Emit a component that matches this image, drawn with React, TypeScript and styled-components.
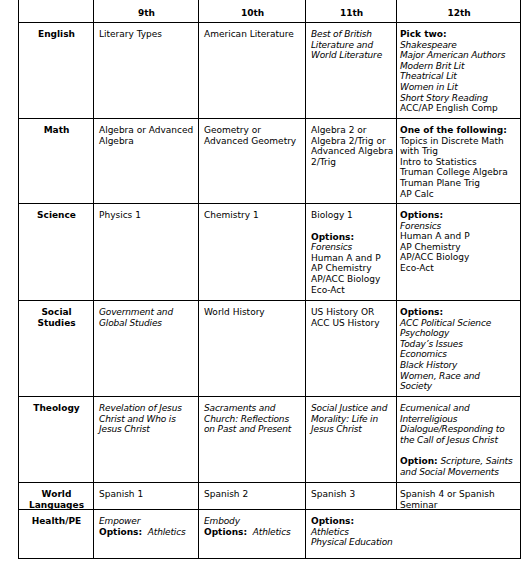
import React from 'react';
import styled, { createGlobalStyle } from 'styled-components';

const GlobalStyle = createGlobalStyle`
    html, body {
        margin: 0;
        padding: 0;
        background: #ffffff;
    }
    body {
        font-family: 'DejaVu Sans', Verdana, sans-serif;
        font-size: 9px;
        line-height: 10.6px;
        color: #000000;
    }
`;

const Page = styled.div`
    padding-left: 18px;
    margin-top: -1px;
`;

const Grid = styled.div`
    display: grid;
    width: max-content;
    grid-template-columns: 75px 105px 107px 91px 124px;
    grid-template-rows: 23px 96px 85px 97px 96px 86px 27px 49px;
    border-left: 1px solid #000;
    border-top: 1px solid #000;
`;

const Cell = styled.div<{ $center?: boolean; $span?: number; $top?: number; $left?: number }>`
    box-sizing: border-box;
    border-right: 1px solid #000;
    border-bottom: 1px solid #000;
    padding: ${({ $top }) => $top ?? 6}px 4px 0 ${({ $left }) => $left ?? 5}px;
    text-align: ${({ $center }) => ($center ? 'center' : 'left')};
    grid-column: span ${({ $span }) => $span ?? 1};
    overflow: hidden;
`;

const HeadCell = styled(Cell)`
    font-weight: bold;
`;

const Label = styled(Cell)`
    font-weight: bold;
`;

// last column sits a little closer to its left rule
const LastCell = styled(Cell).attrs({ $left: 3 })``;

const Line = styled.div`
    white-space: nowrap;
`;

const B = styled.span`
    font-weight: bold;
`;

const I = styled.span`
    font-style: italic;
    letter-spacing: -0.15px;
`;

const Spacer = styled.div<{ $h: number }>`
    height: ${({ $h }) => $h}px;
`;

type Part = string | { b: string } | { i: string };

const renderPart = (p: Part, k: number) => {
    if (typeof p === 'string') return <React.Fragment key={k}>{p}</React.Fragment>;
    if ('b' in p) return <B key={k}>{p.b}</B>;
    return <I key={k}>{p.i}</I>;
};

// each entry is one printed line; a number is a blank gap of that height
type Row = Part | Part[] | number;

const Lines = ({ rows }: { rows: Row[] }) => (
    <>
        {rows.map((r, n) =>
            typeof r === 'number' ? (
                <Spacer key={n} $h={r} />
            ) : (
                <Line key={n}>{(Array.isArray(r) ? r : [r]).map(renderPart)}</Line>
            ),
        )}
    </>
);

const it = (...xs: string[]): Row[] => xs.map(x => ({ i: x }));

const options: Row[] = [{ b: 'Options:' }];

const App = () => (
    <Page>
        <GlobalStyle />
        <Grid>
            <HeadCell $center $top={8} />
            <HeadCell $center $top={8}>9th</HeadCell>
            <HeadCell $center $top={8}>10th</HeadCell>
            <HeadCell $center $top={8}>11th</HeadCell>
            <HeadCell $center $top={8}>12th</HeadCell>

            <Label $center>English</Label>
            <Cell>Literary Types</Cell>
            <Cell>American Literature</Cell>
            <Cell>
                <Lines rows={it('Best of British', 'Literature and', 'World Literature')} />
            </Cell>
            <LastCell>
                <Lines
                    rows={[
                        { b: 'Pick two:' },
                        ...it(
                            'Shakespeare',
                            'Major American Authors',
                            'Modern Brit Lit',
                            'Theatrical Lit',
                            'Women in Lit',
                            'Short Story Reading',
                        ),
                        'ACC/AP English Comp',
                    ]}
                />
            </LastCell>

            <Label $center>Math</Label>
            <Cell>
                <Lines rows={['Algebra or Advanced', 'Algebra']} />
            </Cell>
            <Cell>
                <Lines rows={['Geometry or', 'Advanced Geometry']} />
            </Cell>
            <Cell>
                <Lines rows={['Algebra 2 or', 'Algebra 2/Trig or', 'Advanced Algebra', '2/Trig']} />
            </Cell>
            <LastCell>
                <Lines
                    rows={[
                        { b: 'One of the following:' },
                        'Topics in Discrete Math',
                        'with Trig',
                        'Intro to Statistics',
                        'Truman College Algebra',
                        'Truman Plane Trig',
                        'AP Calc',
                    ]}
                />
            </LastCell>

            <Label $center>Science</Label>
            <Cell>Physics 1</Cell>
            <Cell>Chemistry 1</Cell>
            <Cell>
                <Lines
                    rows={[
                        'Biology 1',
                        11,
                        ...options,
                        { i: 'Forensics' },
                        'Human A and P',
                        'AP Chemistry',
                        'AP/ACC Biology',
                        'Eco-Act',
                    ]}
                />
            </Cell>
            <LastCell>
                <Lines
                    rows={[
                        ...options,
                        { i: 'Forensics' },
                        'Human A and P',
                        'AP Chemistry',
                        'AP/ACC Biology',
                        'Eco-Act',
                    ]}
                />
            </LastCell>

            <Label $center>
                <Lines rows={['Social', 'Studies']} />
            </Label>
            <Cell>
                <Lines rows={it('Government and', 'Global Studies')} />
            </Cell>
            <Cell>World History</Cell>
            <Cell>
                <Lines rows={['US History OR', 'ACC US History']} />
            </Cell>
            <LastCell>
                <Lines
                    rows={[
                        ...options,
                        ...it(
                            'ACC Political Science',
                            'Psychology',
                            'Today\u2019s Issues',
                            'Economics',
                            'Black History',
                            'Women, Race and',
                            'Society',
                        ),
                    ]}
                />
            </LastCell>

            <Label $center>Theology</Label>
            <Cell>
                <Lines rows={it('Revelation of Jesus', 'Christ and Who is', 'Jesus Christ')} />
            </Cell>
            <Cell>
                <Lines rows={it('Sacraments and', 'Church: Reflections', 'on Past and Present')} />
            </Cell>
            <Cell>
                <Lines rows={it('Social Justice and', 'Morality: Life in', 'Jesus Christ')} />
            </Cell>
            <LastCell>
                <Lines
                    rows={[
                        ...it(
                            'Ecumenical and',
                            'Interreligious',
                            'Dialogue/Responding to',
                            'the Call of Jesus Christ',
                        ),
                        11,
                        [{ b: 'Option:' }, ' ', { i: 'Scripture, Saints' }],
                        { i: 'and Social Movements' },
                    ]}
                />
            </LastCell>

            <Label $center>
                <Lines rows={['World', 'Languages']} />
            </Label>
            <Cell>Spanish 1</Cell>
            <Cell>Spanish 2</Cell>
            <Cell>Spanish 3</Cell>
            <LastCell>
                <Lines rows={['Spanish 4 or Spanish', 'Seminar']} />
            </LastCell>

            <Label $center>Health/PE</Label>
            <Cell>
                <Lines rows={[{ i: 'Empower' }, [{ b: 'Options:' }, '\u00a0 ', { i: 'Athletics' }]]} />
            </Cell>
            <Cell>
                <Lines rows={[{ i: 'Embody' }, [{ b: 'Options:' }, '\u00a0 ', { i: 'Athletics' }]]} />
            </Cell>
            <Cell $span={2}>
                <Lines rows={[...options, ...it('Athletics', 'Physical Education')]} />
            </Cell>
        </Grid>
    </Page>
);

export default App;
